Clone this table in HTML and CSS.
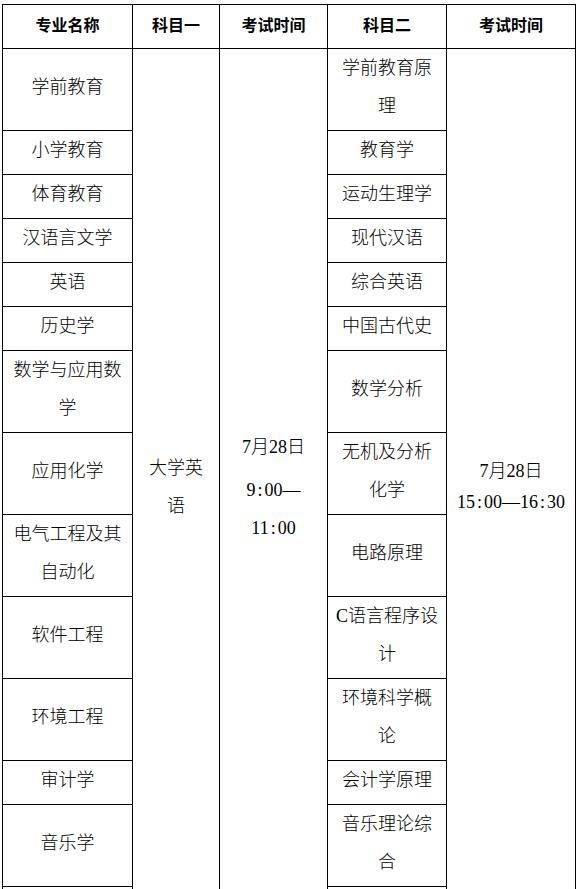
FILE: index.html
```html
<!DOCTYPE html>
<html lang="zh-CN">
<head>
<meta charset="utf-8">
<title>考试时间安排</title>
<link rel="stylesheet" href="styles.css">
</head>
<body>
<div class="schedule">
  <div class="cell head">专业名称</div>
  <div class="cell head">科目一</div>
  <div class="cell head">考试时间</div>
  <div class="cell head">科目二</div>
  <div class="cell head">考试时间</div>

  <div class="cell">学前教育</div>
  <div class="cell span col2">大学英语</div>
  <div class="cell span col3 time">
    <div class="first">7月28日</div>
    <div>9<span class="c">:</span>00—</div>
    <div>11<span class="c">:</span>00</div>
  </div>
  <div class="cell">学前教育原理</div>
  <div class="cell span col5 time compact">
    <div>7月28日</div>
    <div>15<span class="c">:</span>00—16<span class="c">:</span>30</div>
  </div>

  <div class="cell">小学教育</div>
  <div class="cell">教育学</div>
  <div class="cell">体育教育</div>
  <div class="cell">运动生理学</div>
  <div class="cell">汉语言文学</div>
  <div class="cell">现代汉语</div>
  <div class="cell">英语</div>
  <div class="cell">综合英语</div>
  <div class="cell">历史学</div>
  <div class="cell">中国古代史</div>
  <div class="cell">数学与应用数学</div>
  <div class="cell">数学分析</div>
  <div class="cell">应用化学</div>
  <div class="cell">无机及分析化学</div>
  <div class="cell">电气工程及其自动化</div>
  <div class="cell">电路原理</div>
  <div class="cell">软件工程</div>
  <div class="cell">C语言程序设计</div>
  <div class="cell">环境工程</div>
  <div class="cell">环境科学概论</div>
  <div class="cell">审计学</div>
  <div class="cell">会计学原理</div>
  <div class="cell">音乐学</div>
  <div class="cell">音乐理论综合</div>
  <div class="cell">&nbsp;</div>
  <div class="cell">&nbsp;</div>
</div>
</body>
</html>
```

FILE: styles.css
```css
html, body {
  margin: 0;
  padding: 0;
  background: #fff;
}

body {
  padding: 4px 0 0 2px;
  font-family: "Liberation Serif", "Noto Sans CJK SC", sans-serif;
  font-size: 18px;
  font-weight: 300;
  color: #000;
}

.schedule {
  display: grid;
  width: 572px;
  grid-template-columns: 129px 86px 107px 118px 128px;
  grid-template-rows: 43px 81px 43px 43px 43px 43px 43px 81px 81px 81px 81px 81px 43px 81px 43px;
  gap: 1px;
  padding: 1px;
  background: #000;
}

.cell {
  background: #fff;
  display: flex;
  flex-direction: column;
  align-items: center;
  justify-content: center;
  text-align: center;
  padding: 0 7.2px 5px;
  line-height: 38px;
  min-width: 0;
  overflow-wrap: anywhere;
}

.head {
  font-family: "Noto Sans CJK SC", sans-serif;
  font-weight: bold;
  font-size: 16px;
}

.span {
  grid-row: 2 / 16;
}

.col2 {
  grid-column: 2;
}

.col3 {
  grid-column: 3;
}

.col5 {
  grid-column: 5;
}

.time {
  white-space: nowrap;
}

.time .first {
  margin-bottom: 5px;
}

.compact {
  line-height: 31px;
}

.c {
  display: inline-block;
  width: 9px;
  text-align: center;
}
```
